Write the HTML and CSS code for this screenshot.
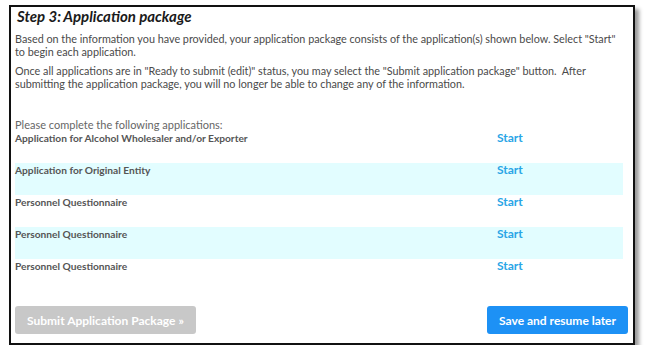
FILE: index.html
```html
<!DOCTYPE html>
<html>
<head>
    <title>Step 3: Application package</title>
    <meta name="viewport" content="width=device-width, initial-scale=1">
    <link rel="stylesheet" href="styles.css">
</head>
<body>
    <div class="panel">
        <h1>Step 3:<span class="thin"> </span>Application package</h1>
        <p class="intro">Based on the information you have provided, your application package consists of the application(s) shown below. Select "Start" to begin each application.</p>
        <p class="intro">Once all applications are in "Ready to submit (edit)" status, you may select the "Submit application package" button.&nbsp; After submitting the application package, you will no longer be able to change any of the information.</p>

        <div class="list-label">Please complete the following applications:</div>
        <div class="app-list">
            <div class="app-row">
                <span class="app-name">Application for Alcohol Wholesaler and/or Exporter</span>
                <a class="start-link" href="#">Start</a>
            </div>
            <div class="app-row alt">
                <span class="app-name">Application for Original Entity</span>
                <a class="start-link" href="#">Start</a>
            </div>
            <div class="app-row">
                <span class="app-name">Personnel Questionnaire</span>
                <a class="start-link" href="#">Start</a>
            </div>
            <div class="app-row alt">
                <span class="app-name">Personnel Questionnaire</span>
                <a class="start-link" href="#">Start</a>
            </div>
            <div class="app-row">
                <span class="app-name">Personnel Questionnaire</span>
                <a class="start-link" href="#">Start</a>
            </div>
        </div>

        <div class="actions">
            <button class="btn-submit" disabled>Submit Application Package &raquo;</button>
            <button class="btn-save">Save and resume later</button>
        </div>
    </div>
</body>
</html>
```

FILE: styles.css
```css
body {
    margin: 0;
    background: #fff;
    font-family: Lato, "Open Sans", sans-serif;
}
.panel {
    margin: 5px 0 0 9px;
    width: 608px;
    height: 336px;
    border: 2px solid #111;
    box-shadow: 4px 4px 4px #999;
    padding: 0 10px 0 4px;
    display: flex;
    flex-direction: column;
}
h1 {
    font-size: 15px;
    font-style: italic;
    font-weight: bold;
    color: #1a1a1a;
    margin: 0 0 0 2px;
    line-height: 18px;
}
.thin {
    font-size: 10px;
}
.intro {
    font-size: 10.8px;
    color: #4a4a4a;
    margin: 6px 0 0 0;
    line-height: 13px;
}
h1 + .intro {
    margin-top: 5px;
}
.list-label {
    font-size: 11px;
    color: #666;
    margin-top: 29px;
    line-height: 12px;
}
.app-row {
    display: grid;
    grid-template-columns: 482px 1fr;
    height: 32px;
    line-height: 14px;
}
.app-row.alt {
    background-color: #e2fdff;
}
.app-name {
    font-size: 10.2px;
    font-weight: bold;
    color: #555;
}
.start-link {
    color: #2aa5e6;
    font-weight: bold;
    font-size: 12px;
    text-decoration: none;
}
.actions {
    display: flex;
    justify-content: space-between;
    margin: auto -5px 9px 0;
}
button {
    border: none;
    border-radius: 3px;
    color: white;
    font-family: Lato, "Open Sans", sans-serif;
    font-weight: bold;
    font-size: 12px;
    height: 28px;
    padding: 0 12px;
}
.btn-submit {
    background-color: #c8c8c8;
}
.btn-save {
    background-color: #1d91f5;
    cursor: pointer;
}
```
